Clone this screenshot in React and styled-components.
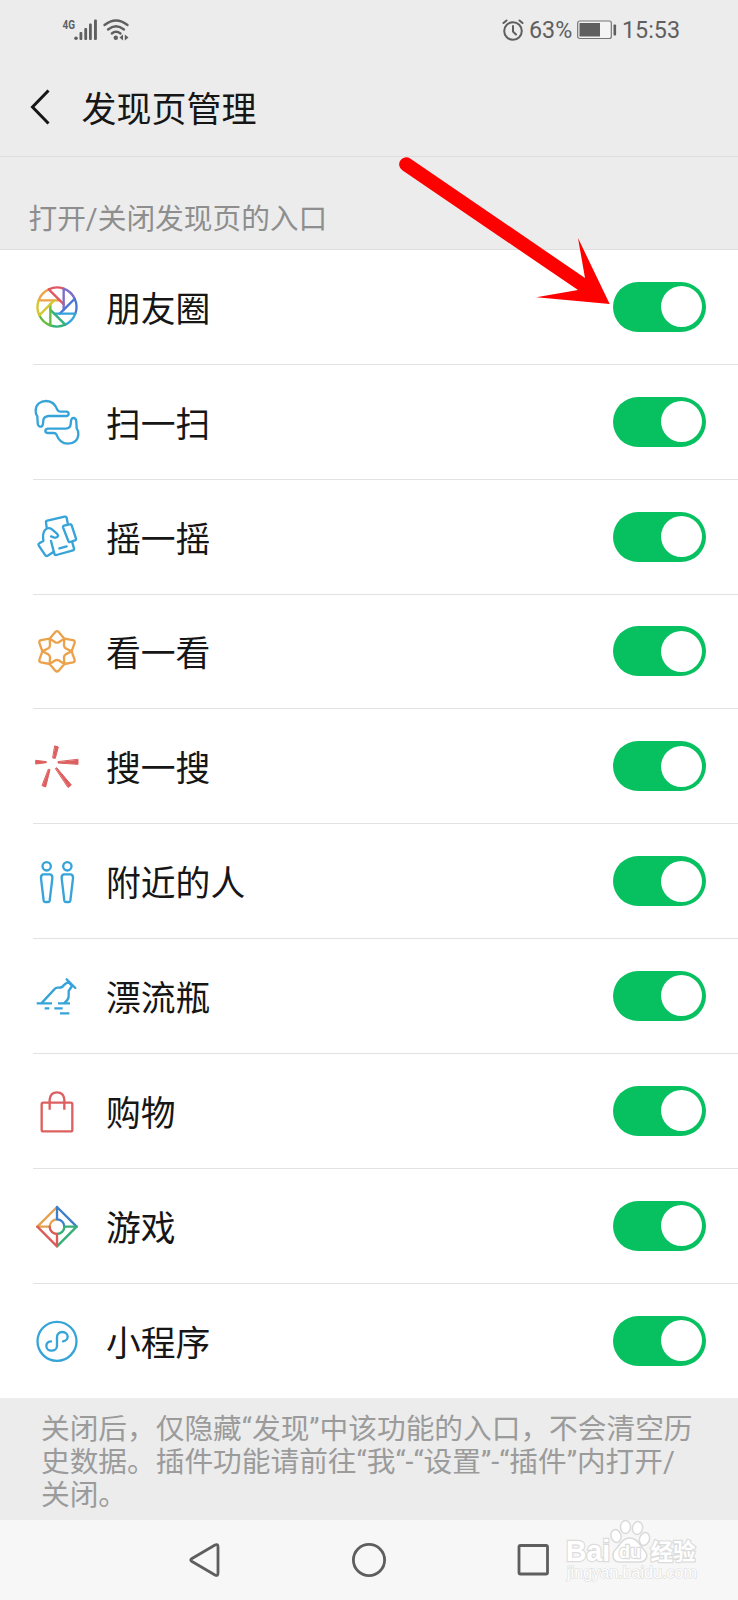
import styled, { createGlobalStyle } from 'styled-components';

const BLUE = '#36a3d9'
const RED = '#dd6060'
const ORANGE = '#eca14b'

const BLADES = ['#eea24a', '#de5a62', '#7d6cc9', '#4a76cf', '#37a3dc', '#33b27c', '#63bb3f', '#d3c62f']

const MomentsIcon = () => (
  <g transform="translate(72 72)">
    {BLADES.map((color, index) => (
      <path
        key={color}
        d="M8 -20H-55A58.5 58.5 0 0 1 -24.8 -53"
        stroke={color}
        transform={`rotate(${index * 45})`}
      />
    ))}
  </g>
)

const HAND = 'M30 78Q29 88 21 87Q15 86 14 76L13 56Q7 48 8 38C9 20 22 10 40 10C58 10 68 22 74 38Q76 42 82 42H100Q107 43 107 48Q107 54 100 55H46Q32 57 31 68Z'

const ScanIcon = () => (
  <g stroke={BLUE} transform="translate(0 -1)">
    <path d={HAND} />
    <path d={HAND} transform="rotate(180 72 74)" />
  </g>
)

const ShakeIcon = () => (
  <g stroke={BLUE}>
    <path d="M41 43L39 29Q38 25 43 23L95 11Q100 10 101 14L104 30" />
    <path d="M118 89L123 106Q124 111 120 112L70 126Q65 127 64 122L54 84" />
    <path d="M93 38L110 34Q114 33 116 37L129 77Q130 81 126 82L111 87Q107 88 106 84L90 43Q89 39 93 38Z" />
    <path d="M54 70L62 73Q73 76 75 69Q76 66 71 61L57 49Q46 41 36 51Q28 60 31 84L19 91Q15 93 17 97L37 127Q40 131 44 128L61 117" />
    <path d="M79 106L101 100" />
  </g>
)

const LookIcon = () => (
  <g stroke={ORANGE} transform="translate(72 73)">
    {[0, 60, 120, 180, 240, 300].map((angle) => (
      <path
        key={angle}
        d="M-22 -38L-5 -58Q0 -63 5 -58L22 -38L5 -27Q0 -25 -5 -27Z"
        transform={`rotate(${angle})`}
      />
    ))}
  </g>
)

const SearchIcon = () => (
  <g fill={RED} stroke={RED} strokeWidth="3">
    <path d="M66 12L76 15L67 49L60 48Z" />
    <path d="M135 53V67L75 63V60Z" />
    <path d="M9 55L40 59V62L9 66Z" />
    <path d="M47 82L51 83L38 135L28 131Z" />
    <path d="M68 79L71 77L115 129L106 136Z" />
  </g>
)

const PeopleIcon = () => (
  <g stroke={BLUE}>
    {[41, 103].map((x) => (
      <g key={x} transform={`translate(${x} 0)`}>
        <circle cx="0" cy="28" r="12.5" />
        <path d="M-11 52H11Q18 54 17 64L9 131Q8 135 4 135H-4Q-8 135 -9 131L-17 64Q-18 54 -11 52Z" />
      </g>
    ))}
  </g>
)

const BottleIcon = () => (
  <g stroke={BLUE}>
    <path d="M11 94H57M75 94H111M35 109H49M64 109H89M81 124H109" strokeLinecap="butt" />
    <path d="M27 92L64 52Q69 46 76 47Q87 48 93 39L106 29L117 42L107 57V74Q106 84 95 92M101 22L127 48" />
  </g>
)

const BagIcon = () => (
  <g stroke={RED}>
    <rect x="26" y="47" width="92" height="86" rx="5" />
    <path d="M50 68V38Q52 16 72 16T94 38V68" strokeLinecap="butt" />
  </g>
)

const GamesIcon = () => (
  <g transform="translate(72 74)">
    <path d="M-59 0L0 -59M-59 0H-22A22 22 0 0 1 0 -22" stroke="#e6a14d" />
    <path d="M0 -59L59 0M0 -59V-22A22 22 0 0 1 22 0" stroke="#3d7fcb" />
    <path d="M59 0L0 59M59 0H22A22 22 0 0 1 0 22" stroke="#35ae78" />
    <path d="M0 59L-59 0M0 59V22A22 22 0 0 1 -22 0" stroke="#dc5b58" />
  </g>
)

const MiniProgramIcon = () => (
  <g stroke={BLUE}>
    <circle cx="72" cy="73" r="58.5" />
    <path d="M54 73C45 74 40 80 40 87C40 95 47 101 55 101C65 101 72 95 72 86V60C72 51 79 45 88 45C97 45 104 51 104 59C104 66 98 72 90 73" />
  </g>
)

const ENTRIES = [
  { id: 'moments', label: '朋友圈', Icon: MomentsIcon },
  { id: 'scan', label: '扫一扫', Icon: ScanIcon },
  { id: 'shake', label: '摇一摇', Icon: ShakeIcon },
  { id: 'look', label: '看一看', Icon: LookIcon },
  { id: 'search', label: '搜一搜', Icon: SearchIcon },
  { id: 'nearby', label: '附近的人', Icon: PeopleIcon },
  { id: 'bottle', label: '漂流瓶', Icon: BottleIcon },
  { id: 'shopping', label: '购物', Icon: BagIcon },
  { id: 'games', label: '游戏', Icon: GamesIcon },
  { id: 'mini', label: '小程序', Icon: MiniProgramIcon },
]

const Signal = () => (
  <svg width="68" height="26" viewBox="0 0 68 26" fill="#5f5f5f">
    <text x="0.5" y="12" fontSize="13.5" fontWeight="700" fontFamily="Roboto, sans-serif" textLength="12.5" lengthAdjust="spacingAndGlyphs">4G</text>
    <circle cx="14" cy="21.2" r="1.8" />
    <rect x="17.5" y="15" width="2.8" height="8" rx="1" />
    <rect x="22.3" y="11" width="2.8" height="12" rx="1" />
    <rect x="27" y="6.5" width="2.8" height="16.5" rx="1" />
    <rect x="32" y="2.5" width="2.9" height="20.5" rx="1" />
    <g fill="none" stroke="#5f5f5f" strokeWidth="2.3" strokeLinecap="round">
      <path d="M42.5 8Q54 -1 65.500 8" />
      <path d="M46 12.5Q54 6 62 12.5" />
      <path d="M49.8 16.5Q54 13 58.5 16.5" />
    </g>
    <circle cx="53.8" cy="20.7" r="2.2" />
    <path d="M57.5 20.5L61 17.5V23.5ZM66.5 20.5L62.8 17.5V23.5Z" />
  </svg>
)

const Alarm = () => (
  <svg width="22" height="22" viewBox="0 0 22 22" fill="none" stroke="#5f5f5f" strokeWidth="2" strokeLinecap="round">
    <circle cx="11" cy="12" r="8.8" />
    <path d="M11 7V12.5L14 15.5M1.5 4L4.5 1.5M20.5 4L17.5 1.5" />
  </svg>
)

const Battery = () => (
  <svg width="40" height="20" viewBox="0 0 40 20">
    <rect x="0.7" y="1" width="33.6" height="17.5" rx="2" fill="#f4f4f4" stroke="#747474" strokeWidth="1.2" />
    <rect x="2.5" y="3" width="20.5" height="13.5" fill="#5f5f5f" />
    <rect x="36.5" y="4.5" width="2.6" height="11" rx="0.8" fill="#5f5f5f" />
  </svg>
)

export default function App() {
  return (
    <>
      <GlobalStyle />
      <Screen>
        <StatusBar>
          <Signal />
          <StatusRight>
            <Alarm />
            <StatusText $width={44}>63%</StatusText>
            <Battery />
            <StatusText $width={58}>15:53</StatusText>
          </StatusRight>
        </StatusBar>

        <Header>
          <svg width="20" height="36" viewBox="0 0 20 36" fill="none" stroke="#161616" strokeWidth="3">
            <path d="M18.5 1.5L2.5 18L18.5 34.5" />
          </svg>
          <Title>发现页管理</Title>
        </Header>

        <SectionTitle>打开/关闭发现页的入口</SectionTitle>

        <List>
          {ENTRIES.map(({ id, label, Icon }) => (
            <Row key={id}>
              <EntryIcon viewBox="0 0 144 144">
                <Icon />
              </EntryIcon>
              <Label>{label}</Label>
              <Switch role="switch" aria-checked="true">
                <Thumb />
              </Switch>
            </Row>
          ))}
        </List>

        <Note>
          关闭后，仅隐藏“发现”中该功能的入口，不会清空历<br />
          史数据。插件功能请前往“我“-“设置”-“插件”内打开/<br />
          关闭。
        </Note>

        <NavBar>
          <svg width="34" height="36" viewBox="0 0 34 36">
            <path d="M4 16.5L27 3Q30 1.5 30 5V31Q30 34.5 27 33L4 19.5Q1.5 18 4 16.5Z" />
          </svg>
          <svg width="36" height="36" viewBox="0 0 36 36">
            <circle cx="18" cy="18" r="15.6" />
          </svg>
          <svg width="34" height="36" viewBox="0 0 34 36">
            <rect x="3" y="3.5" width="28.5" height="28.5" rx="1.5" />
          </svg>
        </NavBar>

        <Arrow width="220" height="156" viewBox="-10 0 220 156">
          <path d="M10.2 2.5L185 122L178 82L209.7 148L136.3 141.3L178 134L2.3 14.3A7 7 0 0 1 10.2 2.5Z" fill="#fe0000" />
        </Arrow>

        <Watermark width="160" height="76" viewBox="0 0 160 76">
          <g fill="#ffffff" stroke="#dadada" strokeWidth="1.5">
            <ellipse cx="53" cy="17" rx="5" ry="6.5" transform="rotate(-15 53 17)" />
            <ellipse cx="62.5" cy="8" rx="5" ry="6.5" />
            <ellipse cx="74.5" cy="9" rx="5" ry="6.5" transform="rotate(12 74.5 9)" />
            <ellipse cx="81.5" cy="20" rx="5" ry="6.5" transform="rotate(18 81.5 20)" />
            <path d="M67 19C75 19 78 28 81 31C86 36 84 43 76 43H57C49 43 48 35 53 30C57 26 59 19 67 19Z" />
          </g>
          <WatermarkText x="3" y="42" $size={29} textLength="44" lengthAdjust="spacingAndGlyphs">Bai</WatermarkText>
          <WatermarkText x="56" y="39" $size={18} textLength="22" lengthAdjust="spacingAndGlyphs">du</WatermarkText>
          <WatermarkText x="87.5" y="40.5" $size={22.5}>经验</WatermarkText>
          <WatermarkText x="4" y="59" $size={16} $thin textLength="130" lengthAdjust="spacingAndGlyphs">jingyan.baidu.com</WatermarkText>
        </Watermark>
      </Screen>
    </>
  )
}

const GlobalStyle = createGlobalStyle`
  body {
    margin: 0;
    background: #ececec;
  }
`;

const Screen = styled.div`
  position: relative;
  display: flex;
  flex-direction: column;
  width: 738px;
  height: 1600px;
  overflow: hidden;
  background: #ececec;
  font-family: Roboto, "Noto Sans CJK SC", sans-serif;
`;

const StatusBar = styled.div`
  display: flex;
  justify-content: space-between;
  align-items: center;
  box-sizing: border-box;
  height: 60px;
  padding: 0 58px 1px 62px;
`;

const StatusRight = styled.div`
  display: flex;
  align-items: center;
  gap: 4px;
`;

const StatusText = styled.span`
  width: ${({ $width }) => $width}px;
  margin-left: 1px;
  color: #5f5f5f;
  font-size: 23.3px;
  line-height: 28px;
  white-space: nowrap;
`;

const Header = styled.header`
  display: flex;
  align-items: center;
  gap: 32px;
  box-sizing: border-box;
  height: 97px;
  padding: 0 29.5px 2px;
  border-bottom: 1px solid #dedede;
`;

const Title = styled.h1`
  margin: 0;
  padding-top: 7px;
  color: #161616;
  font-size: 35px;
  font-weight: 400;
  line-height: 50px;
`;

const SectionTitle = styled.div`
  display: flex;
  align-items: flex-end;
  box-sizing: border-box;
  height: 93px;
  padding: 0 28.5px 10px;
  border-bottom: 1px solid #dedede;
  color: #8e8e8e;
  font-size: 28.7px;
  line-height: 40px;
`;

const List = styled.div`
  display: flex;
  flex-direction: column;
  height: 1147.5px;
  background: #ffffff;
`;

const Row = styled.div`
  display: flex;
  flex: 1;
  align-items: center;
  box-sizing: border-box;
  margin-left: 33px;
  padding-right: 32px;

  & + & {
    border-top: 1px solid #e2e2e2;
  }
`;

const EntryIcon = styled.svg`
  width: 48px;
  height: 48px;
  fill: none;
  stroke-width: 7;
  stroke-linecap: round;
  stroke-linejoin: round;
`;

const Label = styled.span`
  flex: 1;
  margin-left: 25px;
  padding-top: 6px;
  color: #161616;
  font-size: 34.8px;
  line-height: 50px;
`;

const Switch = styled.div`
  display: flex;
  align-items: center;
  justify-content: flex-end;
  box-sizing: border-box;
  width: 93px;
  height: 50px;
  padding: 4.5px;
  border-radius: 25px;
  background: #07c160;
`;

const Thumb = styled.div`
  width: 41px;
  height: 41px;
  border-radius: 50%;
  background: #ffffff;
`;

const Note = styled.p`
  box-sizing: border-box;
  height: 122px;
  margin: 0;
  padding: 15px 0 0 41px;
  color: #9b9b9b;
  font-size: 28.7px;
  line-height: 33.3px;
  white-space: nowrap;
`;

const NavBar = styled.nav`
  display: flex;
  justify-content: space-between;
  align-items: center;
  flex: 1;
  padding: 0 188px;
  background: #f7f7f7;

  svg {
    fill: none;
    stroke: #5e5e5e;
    stroke-width: 2.8;
  }
`;

const Arrow = styled.svg`
  position: absolute;
  top: 156px;
  left: 390px;
`;

const Watermark = styled.svg`
  position: absolute;
  top: 1519px;
  left: 563px;
`;

const WatermarkText = styled.text`
  fill: #ffffff;
  stroke: #dcdcdc;
  stroke-width: ${({ $thin }) => ($thin ? 1.2 : 2.4)};
  paint-order: stroke;
  font-family: "Liberation Sans", "Noto Sans CJK SC", sans-serif;
  font-size: ${({ $size }) => $size}px;
  font-weight: ${({ $thin }) => ($thin ? 400 : 700)};
`;
